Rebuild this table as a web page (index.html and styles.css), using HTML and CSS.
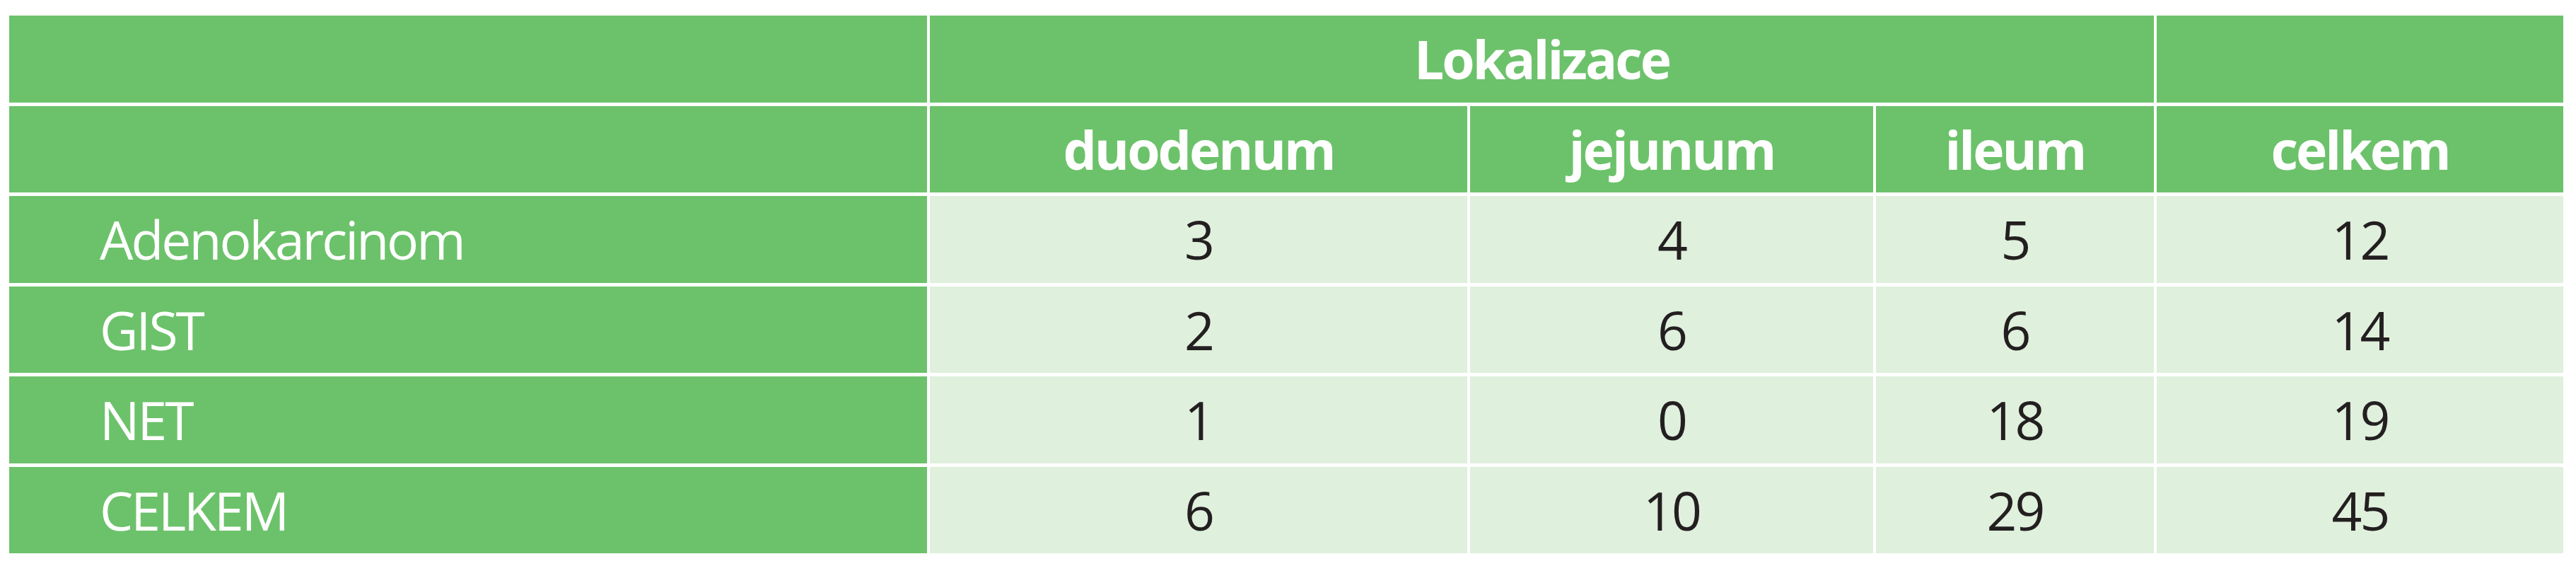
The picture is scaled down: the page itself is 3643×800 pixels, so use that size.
FILE: index.html
```html
<!DOCTYPE html>
<html lang="cs">
<head>
<meta charset="utf-8">
<title>Lokalizace</title>
<link rel="stylesheet" href="styles.css">
</head>
<body>
<table class="data">
  <colgroup>
    <col class="c-label">
    <col class="c-duo">
    <col class="c-jej">
    <col class="c-ile">
    <col class="c-cel">
  </colgroup>
  <thead>
    <tr>
      <th class="head"></th>
      <th class="head" colspan="3">Lokalizace</th>
      <th class="head"></th>
    </tr>
    <tr>
      <th class="head"></th>
      <th class="head">duodenum</th>
      <th class="head">jejunum</th>
      <th class="head">ileum</th>
      <th class="head">celkem</th>
    </tr>
  </thead>
  <tbody>
    <tr>
      <th class="label">Adenokarcinom</th>
      <td class="num">3</td><td class="num">4</td><td class="num">5</td><td class="num">12</td>
    </tr>
    <tr>
      <th class="label">GIST</th>
      <td class="num">2</td><td class="num">6</td><td class="num">6</td><td class="num">14</td>
    </tr>
    <tr>
      <th class="label">NET</th>
      <td class="num">1</td><td class="num">0</td><td class="num">18</td><td class="num">19</td>
    </tr>
    <tr>
      <th class="label">CELKEM</th>
      <td class="num">6</td><td class="num">10</td><td class="num">29</td><td class="num">45</td>
    </tr>
  </tbody>
</table>
</body>
</html>
```

FILE: styles.css
```css
html, body {
  margin: 0;
  padding: 0;
  background: #ffffff;
}

.data {
  margin: 17px 0 0 9px;
  width: 3620px;
  table-layout: fixed;
  border-collapse: separate;
  border-spacing: 4px 5px;
  font-family: "Open Sans", "Noto Sans", sans-serif;
  font-size: 75px;
  letter-spacing: -3px;
}

.c-label { width: 1298px; }
.c-duo { width: 760px; }
.c-jej { width: 570px; }
.c-ile { width: 393px; }
.c-cel { width: 575px; }

.data tr {
  height: 122.5px;
}

.data th,
.data td {
  padding: 0;
  vertical-align: middle;
  line-height: normal;
}

.head {
  background: #6cc26a;
  color: #ffffff;
  font-weight: 700;
  text-align: center;
}

.label {
  background: #6cc26a;
  color: #ffffff;
  font-weight: 400;
  text-align: left;
  padding-left: 128px !important;
}

.num {
  background: #dff0dc;
  color: #231f20;
  font-weight: 400;
  text-align: center;
}
```
